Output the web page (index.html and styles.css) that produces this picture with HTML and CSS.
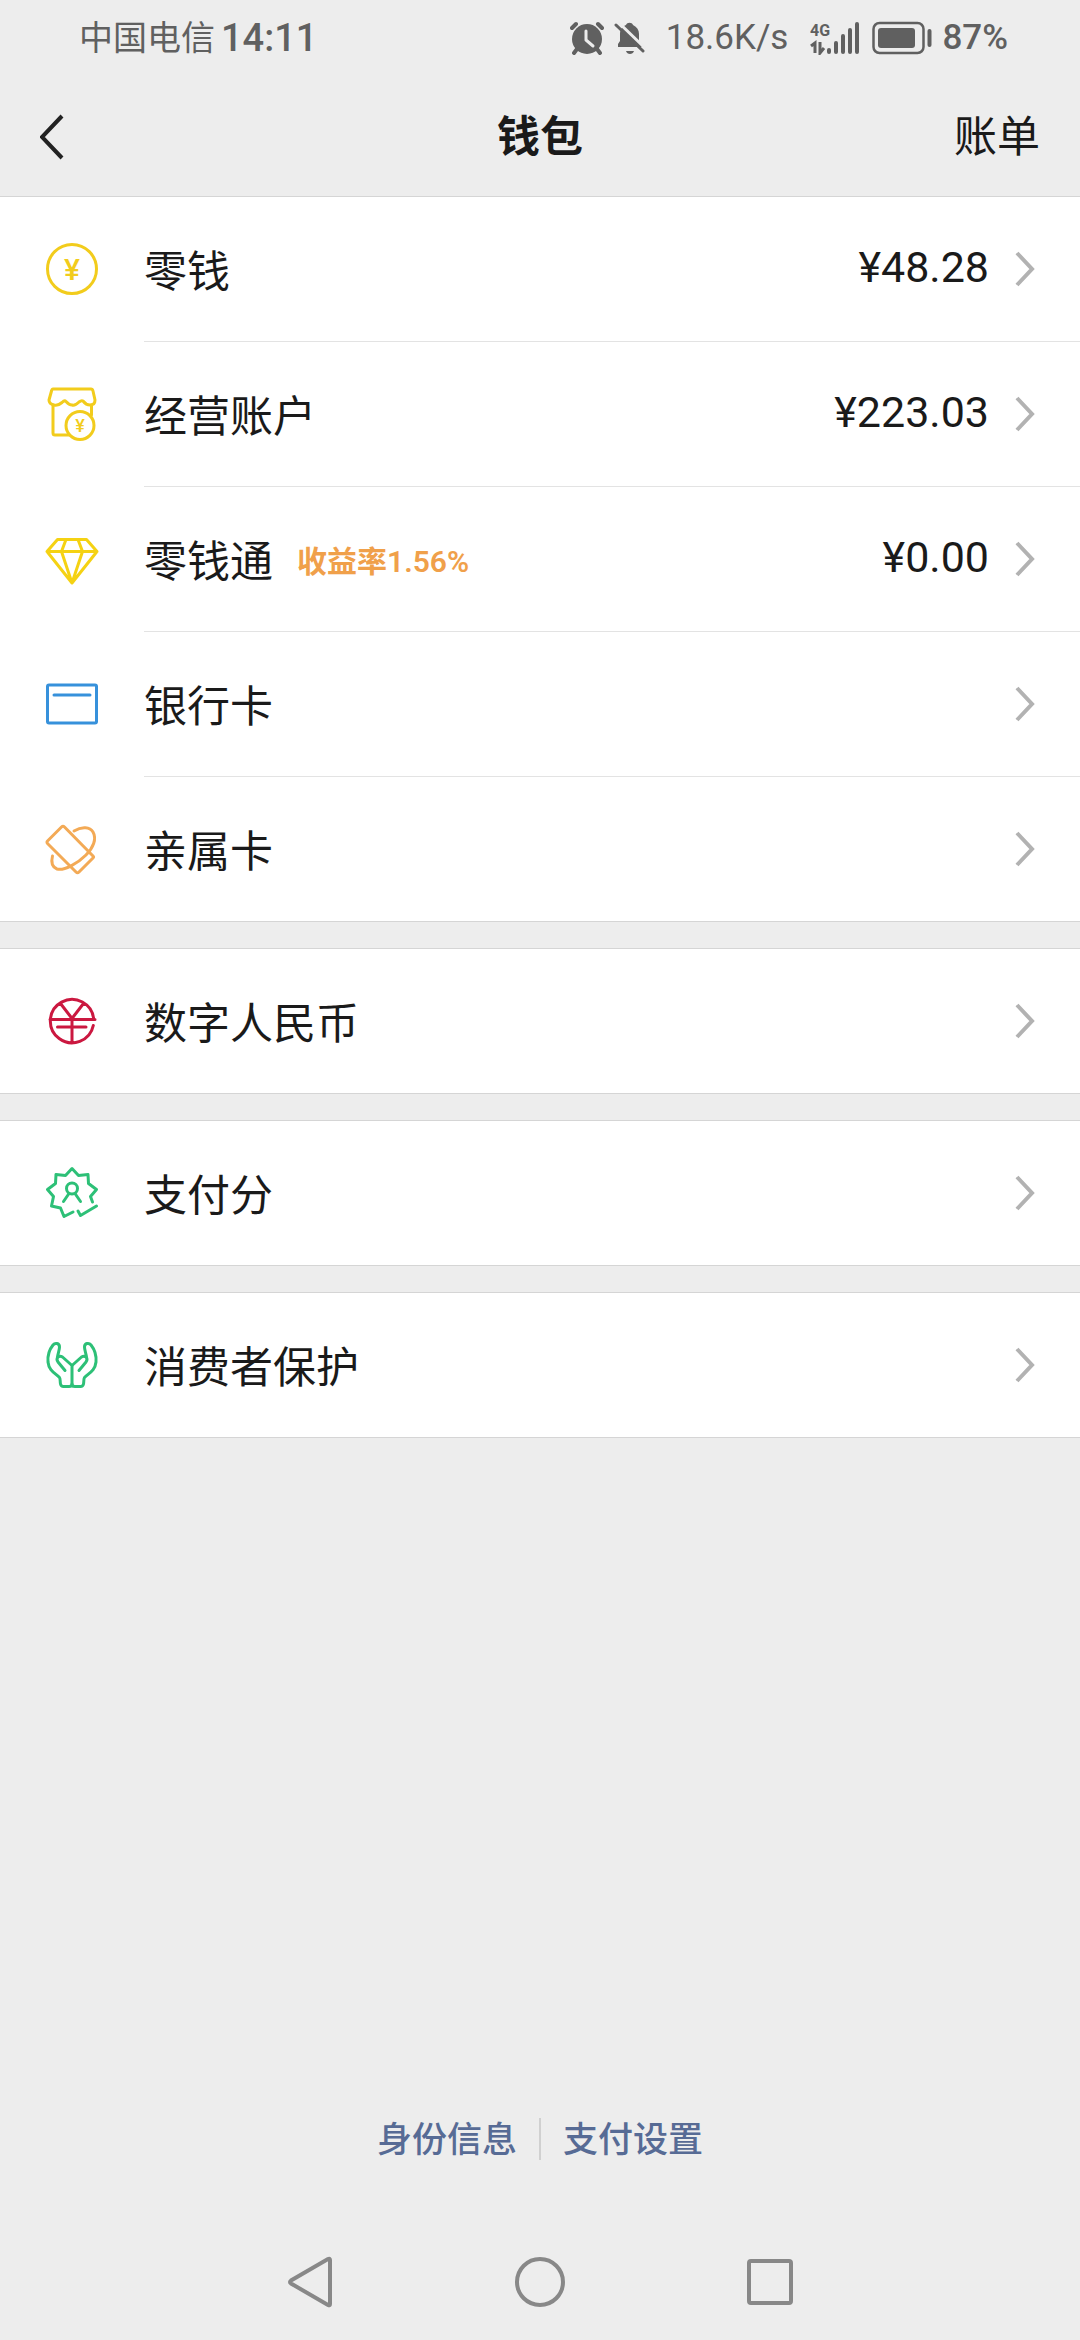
FILE: index.html
```html
<!DOCTYPE html>
<html lang="zh-CN">
<head>
    <meta charset="UTF-8">
    <meta name="viewport" content="width=device-width, initial-scale=1.0">
    <title>钱包</title>
    <link rel="stylesheet" href="styles.css">
</head>
<body>
    <div class="status-bar">
        <span class="carrier">中国电信</span>
        <span class="clock">14:11</span>
        <svg class="alarm" width="34" height="34" viewBox="0 0 34 34">
            <circle cx="17" cy="18" r="15" fill="#606060"/>
            <path d="M2 7l4-4M32 7l-4-4M7 28l-3 4M27 28l3 4" stroke="#606060" stroke-width="4" stroke-linecap="round"/>
            <path d="M16 10v9l7 6" fill="none" stroke="#ececec" stroke-width="3" stroke-linecap="round" stroke-linejoin="round"/>
        </svg>
        <svg class="mute" width="32" height="34" viewBox="0 0 32 34">
            <path d="M4 26V23L6 20V13C6 8 9 5 12 4C13 1 18 1 19 4C23 6 25 9 25 13V20L28 26ZM12 30H20C19 34 13 34 12 30Z" fill="#606060"/>
            <path d="M4 1L32 28" stroke="#ececec" stroke-width="3"/>
            <path d="M2 4L29 30" stroke="#606060" stroke-width="3" stroke-linecap="round"/>
        </svg>
        <span class="speed">18.6K/s</span>
        <svg class="signal" width="50" height="34" viewBox="0 0 50 34">
            <text x="0" y="15" class="net">4G</text>
            <path d="M1 25L5 22V32M10 21V32L14 27" fill="none" stroke="#606060" stroke-width="3"/>
            <path d="M19 29v2M26 22v9M33 15v16M40 9v22M47 3v28" stroke="#606060" stroke-width="4" stroke-linecap="round"/>
        </svg>
        <svg class="battery" width="60" height="34" viewBox="0 0 60 34">
            <rect x="1.5" y="2" width="50" height="30" rx="6" fill="none" stroke="#606060" stroke-width="2.5"/>
            <rect x="6" y="7" width="37" height="20" rx="3" fill="#606060"/>
            <path d="M57.500 10v14" stroke="#606060" stroke-width="4" stroke-linecap="round"/>
        </svg>
        <span class="percent">87%</span>
    </div>

    <header class="nav">
        <button class="back" aria-label="返回">
            <svg width="26" height="46" viewBox="0 0 26 46"><path d="M22 2L2 23L22 44" fill="none" stroke="#222" stroke-width="4"/></svg>
        </button>
        <h1>钱包</h1>
        <a class="bill" href="#">账单</a>
    </header>

    <main>
        <div class="group">
            <a class="row" href="#">
                <svg class="icon gold" viewBox="0 0 60 60">
                    <circle cx="30" cy="30" r="24.500"/>
                    <text class="yen" x="30" y="41">¥</text>
                </svg>
                <span class="cell"><span class="label">零钱</span><span class="amount">¥48.28</span><svg class="arrow" viewBox="0 0 20 36"><path d="M2 2L17 18L2 34"/></svg></span>
            </a>
            <a class="row" href="#">
                <svg class="icon gold" viewBox="0 0 60 60">
                    <path d="M11 5H49Q50.500 5 51 7L53 16Q53 21 48 21Q44 21 41 17Q39.500 16 37 18Q33 22 30 21Q27 21 24 17.500Q22.500 16 20 18.500Q16 22 12 21Q7 20 7 16L9.500 7Q10 5 11 5Z"/>
                    <path d="M11 21V49Q11 51 13 51H27M49.500 21V31"/>
                    <circle cx="38" cy="41.500" r="14"/>
                    <text class="yen small" x="38" y="48">¥</text>
                </svg>
                <span class="cell"><span class="label">经营账户</span><span class="amount">¥223.03</span><svg class="arrow" viewBox="0 0 20 36"><path d="M2 2L17 18L2 34"/></svg></span>
            </a>
            <a class="row" href="#">
                <svg class="icon yellow" viewBox="0 0 60 60">
                    <path d="M15.500 10.500H44.500L55 22.500L30 54L5 22.500ZM5 22.500H55M24 10.500L19.500 22.500L30 54L40.500 22.500L36 10.500"/>
                </svg>
                <span class="cell"><span class="label">零钱通</span><span class="rate">收益率1.56%</span><span class="amount">¥0.00</span><svg class="arrow" viewBox="0 0 20 36"><path d="M2 2L17 18L2 34"/></svg></span>
            </a>
            <a class="row" href="#">
                <svg class="icon blue" viewBox="0 0 60 60">
                    <rect x="5.500" y="11" width="49" height="38" rx="1.500"/>
                    <path d="M12 21H48"/>
                </svg>
                <span class="cell"><span class="label">银行卡</span><svg class="arrow" viewBox="0 0 20 36"><path d="M2 2L17 18L2 34"/></svg></span>
            </a>
            <a class="row" href="#">
                <svg class="icon orange" viewBox="0 0 60 60">
                    <path d="M19.500 8Q21 6.500 22.500 8L51 37Q52 38 51 39L37 53Q35.500 54.500 34 53L5.500 24.500Q4.500 23 5.500 22Z"/>
                    <path d="M32 12C40 7 48 8 51 13C55 20 51 29 44 36C35 45 22 52 15 50C10 48 9 43 10.500 37"/>
                </svg>
                <span class="cell"><span class="label">亲属卡</span><svg class="arrow" viewBox="0 0 20 36"><path d="M2 2L17 18L2 34"/></svg></span>
            </a>
        </div>

        <div class="group">
            <a class="row" href="#">
                <svg class="icon red" viewBox="0 0 60 60">
                    <path d="M8 28.500H53M51.700 28.500A21.700 21.700 0 1 0 51.300 34.500M15.500 36H44M18.500 12.500L30 27.500L41.500 12.500M30 27V52"/>
                </svg>
                <span class="cell"><span class="label">数字人民币</span><svg class="arrow" viewBox="0 0 20 36"><path d="M2 2L17 18L2 34"/></svg></span>
            </a>
        </div>

        <div class="group">
            <a class="row" href="#">
                <svg class="icon green" viewBox="0 0 60 60">
                    <path d="M50.500 39L48.500 33.500L54.500 26.500L46.500 20.500L46 11.500L36.500 12.500L30 5.500L23.500 12.500L14 11.500L13.500 20.500L5.500 26.500L11.500 33.500L9.500 43L18.500 45L22 53.500L31 49"/>
                    <path d="M36 48L38.500 52.500L54.500 43"/>
                    <circle cx="30" cy="25.500" r="5.500"/>
                    <path d="M21.500 38.500L27 30.500M38.500 38.500L33 30.500"/>
                </svg>
                <span class="cell"><span class="label">支付分</span><svg class="arrow" viewBox="0 0 20 36"><path d="M2 2L17 18L2 34"/></svg></span>
            </a>
        </div>

        <div class="group">
            <a class="row" href="#">
                <svg class="icon green" viewBox="0 0 60 60">
                    <path d="M30 30.500V51M30 30.500L20.500 22Q18 20.500 16 22Q14 24 16 27L23 35.500M15.500 22C16 18 17.500 15 17.500 12C17.500 8 13 7.500 11 10C7 15 5.500 21 6 27C7 36 13 38 17.500 42.500C18.500 44 18 47 18.500 49Q19 51.500 21.500 51.500H27Q30 51.500 30 49"/>
                    <path d="M30 30.500L39.500 22Q42 20.500 44 22Q46 24 44 27L37 35.500M44.500 22C44 18 42.500 15 42.500 12C42.500 8 47 7.500 49 10C53 15 54.500 21 54 27C53 36 47 38 42.500 42.500C41.500 44 42 47 41.500 49Q41 51.500 38.500 51.500H33Q30 51.500 30 49"/>
                </svg>
                <span class="cell"><span class="label">消费者保护</span><svg class="arrow" viewBox="0 0 20 36"><path d="M2 2L17 18L2 34"/></svg></span>
            </a>
        </div>
    </main>

    <footer class="links">
        <a href="#">身份信息</a>
        <a href="#">支付设置</a>
    </footer>

    <div class="system-keys">
        <button aria-label="返回键"><svg width="54" height="54" viewBox="0 0 54 54"><path d="M47 5V49Q47 51 45 50L8 28.500Q6 27 8 25.500L45 4Q47 3 47 5Z"/></svg></button>
        <button aria-label="主屏幕"><svg width="54" height="54" viewBox="0 0 54 54"><circle cx="27" cy="27" r="23"/></svg></button>
        <button aria-label="最近任务"><svg width="54" height="54" viewBox="0 0 54 54"><rect x="6" y="6" width="42" height="42" rx="2"/></svg></button>
    </div>
</body>
</html>
```
FILE: styles.css
```css
* {
    box-sizing: border-box;
}
body {
    margin: 0;
    min-height: 100vh;
    display: flex;
    flex-direction: column;
    background-color: #ededed;
    color: #1a1a1a;
    font-family: Roboto, "Noto Sans CJK SC", sans-serif;
    font-size: 43px;
    line-height: 60px;
}
a {
    color: inherit;
    text-decoration: none;
}
button {
    padding: 0;
    border: none;
    background: none;
    cursor: pointer;
}
svg {
    display: block;
    flex-shrink: 0;
}

/* status bar */
.status-bar {
    display: flex;
    align-items: center;
    height: 76px;
    padding: 0 72px 0 79px;
    color: #606060;
    line-height: 44px;
}
.carrier {
    font-size: 34px;
}
.clock {
    margin-left: 6px;
    font-size: 38px;
    font-weight: 500;
}
.alarm {
    margin-left: auto;
}
.mute {
    margin-left: 10px;
}
.speed {
    margin-left: 20px;
    font-size: 35px;
}
.signal {
    margin-left: 22px;
}
.net {
    font-size: 16px;
    font-weight: 700;
    fill: #606060;
}
.battery {
    margin-left: 12px;
}
.percent {
    margin-left: 10px;
    font-size: 35px;
    font-weight: 500;
}

/* title bar */
.nav {
    display: grid;
    grid-template-columns: 1fr auto 1fr;
    align-items: center;
    height: 120px;
    padding: 2px 40px 0;
}
.nav h1 {
    margin: 0;
    font-size: 43px;
    font-weight: 700;
}
.back {
    justify-self: start;
}
.bill {
    justify-self: end;
}

/* list */
.group {
    margin-bottom: 26px;
    background-color: #fff;
    border-top: 1px solid #d5d5d5;
    border-bottom: 1px solid #d5d5d5;
}
.row {
    display: flex;
    align-items: center;
    padding-left: 42px;
}
.cell {
    flex: 1;
    display: flex;
    align-items: center;
    height: 145px;
    margin-left: 42px;
    padding-right: 45px;
    border-bottom: 1px solid #e3e3e3;
}
.row:last-child .cell {
    height: 144px;
    border-bottom: none;
}
.label,
.rate {
    padding-top: 6px;
}
.rate {
    margin-left: 24px;
    color: #f0a04a;
    font-size: 30px;
    font-weight: 600;
}
.amount {
    margin-left: auto;
    padding-bottom: 4px;
}
.arrow {
    width: 20px;
    height: 36px;
    margin-left: auto;
    fill: none;
    stroke: #b2b2b2;
    stroke-width: 4;
}
.amount + .arrow {
    margin-left: 26px;
}

/* icons */
.icon {
    width: 60px;
    height: 60px;
    margin-bottom: 1px;
    fill: none;
    stroke-width: 3;
    stroke-linecap: round;
    stroke-linejoin: round;
}
.gold {
    stroke: #f2cc1c;
}
.yellow {
    stroke: #f5d213;
}
.blue {
    stroke: #3791db;
}
.orange {
    stroke: #f3aa56;
}
.red {
    stroke: #cb1840;
}
.green {
    stroke: #2dc077;
}
.yen {
    fill: #f2cc1c;
    stroke: none;
    font-size: 30px;
    font-weight: 500;
    text-anchor: middle;
}
.yen.small {
    font-size: 18px;
}

/* bottom */
.links {
    display: flex;
    justify-content: center;
    margin-top: auto;
    margin-bottom: 64px;
    color: #576b95;
    font-size: 35px;
    font-weight: 500;
    line-height: 38px;
}
.links a {
    padding: 4px 22px 0;
}
.links a + a {
    border-left: 2px solid #d0d0d0;
}
.system-keys {
    display: flex;
    justify-content: center;
    gap: 176px;
    height: 116px;
}
.system-keys svg {
    fill: none;
    stroke: #888;
    stroke-width: 4;
}
```
